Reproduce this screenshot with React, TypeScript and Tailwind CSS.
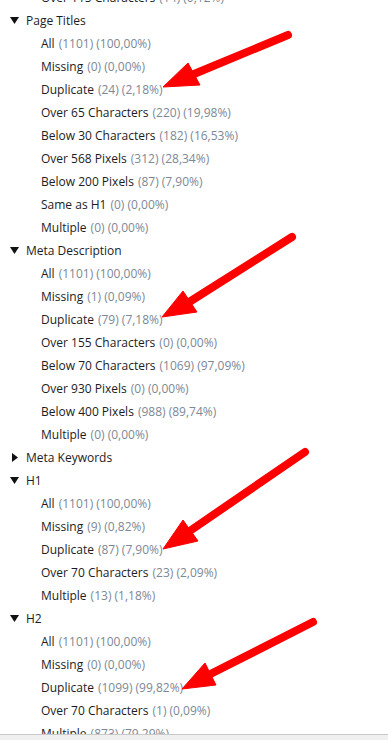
import React from "react";

type Item = { label: string; count: string; pct: string };
type Group = { title: string; open: boolean; items: Item[] };

const it = (label: string, count: string, pct: string): Item => ({ label, count, pct });

const groups: Group[] = [
  {
    title: "Page Titles",
    open: true,
    items: [
      it("All", "1101", "100,00%"),
      it("Missing", "0", "0,00%"),
      it("Duplicate", "24", "2,18%"),
      it("Over 65 Characters", "220", "19,98%"),
      it("Below 30 Characters", "182", "16,53%"),
      it("Over 568 Pixels", "312", "28,34%"),
      it("Below 200 Pixels", "87", "7,90%"),
      it("Same as H1", "0", "0,00%"),
      it("Multiple", "0", "0,00%"),
    ],
  },
  {
    title: "Meta Description",
    open: true,
    items: [
      it("All", "1101", "100,00%"),
      it("Missing", "1", "0,09%"),
      it("Duplicate", "79", "7,18%"),
      it("Over 155 Characters", "0", "0,00%"),
      it("Below 70 Characters", "1069", "97,09%"),
      it("Over 930 Pixels", "0", "0,00%"),
      it("Below 400 Pixels", "988", "89,74%"),
      it("Multiple", "0", "0,00%"),
    ],
  },
  { title: "Meta Keywords", open: false, items: [] },
  {
    title: "H1",
    open: true,
    items: [
      it("All", "1101", "100,00%"),
      it("Missing", "9", "0,82%"),
      it("Duplicate", "87", "7,90%"),
      it("Over 70 Characters", "23", "2,09%"),
      it("Multiple", "13", "1,18%"),
    ],
  },
  {
    title: "H2",
    open: true,
    items: [
      it("All", "1101", "100,00%"),
      it("Missing", "0", "0,00%"),
      it("Duplicate", "1099", "99,82%"),
      it("Over 70 Characters", "1", "0,09%"),
      it("Multiple", "873", "79,29%"),
    ],
  },
];

// tail, tip, head base corners
const arrows = [
  { tail: [288, 35], tip: [163, 87], a: [188, 63], b: [200, 85] },
  { tail: [292, 237], tip: [162, 317], a: [183, 291], b: [197, 312] },
  { tail: [305, 452], tip: [163, 549], a: [183, 520], b: [198, 541] },
  { tail: [313, 622], tip: [182, 689], a: [205, 663], b: [216, 685] },
];

function Row({ item }: { item: Item }) {
  return (
    <div className="flex h-[23px] items-center whitespace-nowrap pl-[41px]">
      <span className="text-[#1c1c24]">{item.label}</span>
      <span className="ml-[4px] text-[#7d8896]">
        ({item.count}) ({item.pct})
      </span>
    </div>
  );
}

function Caret({ open }: { open: boolean }) {
  return open ? (
    <svg width="9" height="7" viewBox="0 0 9 7" className="mr-[7px]">
      <path d="M0 0 H9 L4.5 7 Z" fill="#111" />
    </svg>
  ) : (
    <svg width="9" height="9" viewBox="0 0 9 9" className="mr-[7px]">
      <path d="M2 0 L8 4.5 L2 9 Z" fill="#111" />
    </svg>
  );
}

export default function App() {
  return (
    <div
      className="relative flex h-[740px] w-[388px] flex-col overflow-hidden bg-white text-[12px]"
      style={{ fontFamily: '"Open Sans", "Noto Sans", sans-serif' }}
    >
      <div className="flex-1 overflow-hidden">
        <div className="-mt-[14px]">
          <Row item={it("Over 115 Characters", "14", "0,12%")} />
          {groups.map((g) => (
            <div key={g.title}>
              <div className="flex h-[23px] items-center pl-[10px] text-[#1c1c24]">
                <Caret open={g.open} />
                <span>{g.title}</span>
              </div>
              {g.open && g.items.map((i) => <Row key={i.label} item={i} />)}
            </div>
          ))}
        </div>
      </div>
      <div className="h-[6px] border-t border-[#c9c9c9] bg-[#f0f0f0]" />

      <svg className="pointer-events-none absolute inset-0" width="388" height="740">
        {arrows.map((ar, k) => {
          const mx = (ar.a[0] + ar.b[0]) / 2;
          const my = (ar.a[1] + ar.b[1]) / 2;
          return (
            <g key={k} fill="#ff0000" stroke="#ff0000">
              <line
                x1={ar.tail[0]}
                y1={ar.tail[1]}
                x2={mx}
                y2={my}
                strokeWidth="8"
                strokeLinecap="round"
              />
              <polygon
                points={`${ar.tip[0]},${ar.tip[1]} ${ar.a[0]},${ar.a[1]} ${ar.b[0]},${ar.b[1]}`}
                strokeWidth="1"
                strokeLinejoin="round"
              />
            </g>
          );
        })}
      </svg>
    </div>
  );
}
